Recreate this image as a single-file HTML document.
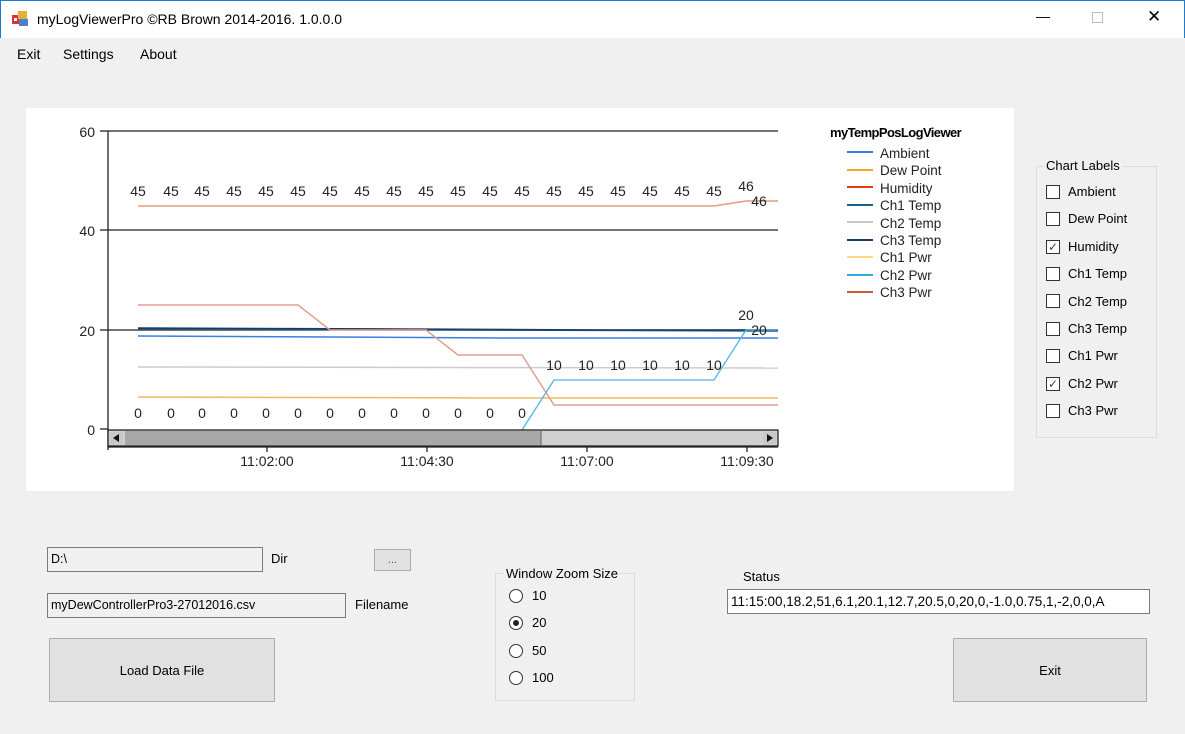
<!DOCTYPE html>
<html><head><meta charset="utf-8"><style>
*{margin:0;padding:0;box-sizing:border-box}
body{width:1185px;height:734px;background:#f0f0f0;font-family:"Liberation Sans",sans-serif;font-size:13px;color:#000;position:relative;overflow:hidden}
.a{position:absolute}
.title{left:0;top:0;width:1185px;height:38px;background:#fff;border:1px solid #1b7bd0;border-bottom:none}
.tb{border:1px solid #7a7a7a;background:#f0f0f0;padding:0 3px;line-height:23px;font-size:12.5px}
.btn{border:1px solid #adadad;background:#e1e1e1;display:flex;align-items:center;justify-content:center;font-size:13px}
.cb{width:14px;height:14px;border:1px solid #333;background:#fff}
.grp{border:1px solid #dcdcdc}
.rd{width:14px;height:14px;border:1px solid #333;border-radius:50%;background:#fff}
</style></head><body>
<div class="a title"></div>
<svg class="a" style="left:12px;top:10px" width="18" height="18"><rect x="0" y="5" width="8" height="9" fill="#d33"/><rect x="6" y="1" width="9" height="8" fill="#e8b030"/><rect x="7" y="9" width="9" height="7" fill="#4a7fd0"/><rect x="2" y="8" width="3" height="3" fill="#fff"/></svg>
<div class="a" style="left:37px;top:11px;font-size:14px">myLogViewerPro ©RB Brown 2014-2016. 1.0.0.0</div>
<div class="a" style="left:1036px;top:8px;font-size:14px">&#8212;</div>
<div class="a" style="left:1092px;top:12px;width:11px;height:11px;border:1px solid #bbb"></div>
<div class="a" style="left:1147px;top:7px;font-size:17px">✕</div>
<div class="a" style="left:17px;top:46px;font-size:14px">Exit</div>
<div class="a" style="left:63px;top:46px;font-size:14px">Settings</div>
<div class="a" style="left:140px;top:46px;font-size:14px">About</div>

<div class="a" style="left:26px;top:108px;width:988px;height:383px;background:#fff"></div>
<svg class="a" style="left:0;top:0" width="1185" height="734" font-family="Liberation Sans,sans-serif" font-size="14">
<g stroke="#222" stroke-width="1.3">
<line x1="108" y1="131" x2="778" y2="131"/><line x1="108" y1="230" x2="778" y2="230"/><line x1="108" y1="330" x2="778" y2="330"/>
<line x1="108" y1="131" x2="108" y2="450"/>
<line x1="100" y1="131" x2="108" y2="131"/><line x1="100" y1="230" x2="108" y2="230"/><line x1="100" y1="330" x2="108" y2="330"/><line x1="100" y1="429" x2="108" y2="429"/>
<line x1="108" y1="447" x2="778" y2="447"/>
<line x1="267" y1="447" x2="267" y2="452"/><line x1="427" y1="447" x2="427" y2="452"/><line x1="587" y1="447" x2="587" y2="452"/><line x1="747" y1="447" x2="747" y2="452"/>
</g>
<g text-anchor="end" fill="#222"><text x="95" y="137">60</text><text x="95" y="236">40</text><text x="95" y="336">20</text><text x="95" y="435">0</text></g>
<g text-anchor="middle" fill="#222"><text x="267" y="466">11:02:00</text><text x="427" y="466">11:04:30</text><text x="587" y="466">11:07:00</text><text x="747" y="466">11:09:30</text></g>
<polyline fill="none" stroke="#f0b860" stroke-width="1.5" points="138,397 500,398 778,398"/>
<polyline fill="none" stroke="#cccccc" stroke-width="1.5" points="138,367 778,368"/>
<polyline fill="none" stroke="#3a80e0" stroke-width="1.5" points="138,336 330,337 500,338 778,338"/>
<polyline fill="none" stroke="#1a6090" stroke-width="1.5" points="138,329 778,331"/>
<polyline fill="none" stroke="#1e3860" stroke-width="1.5" points="138,328 400,329 600,330 778,330"/>
<polyline fill="none" stroke="#e89880" stroke-width="1.5" points="138,206 714,206 746,201 778,201"/>
<polyline fill="none" stroke="#e0a090" stroke-width="1.5" points="138,305 298,305 330,330 426,330 458,355 522,355 554,405 778,405"/>
<polyline fill="none" stroke="#50b4e8" stroke-width="1.3" points="522,430 554,380 714,380 746,330 778,330"/>
<g fill="#222" text-anchor="middle">
<text x="138" y="196">45</text><text x="171" y="196">45</text><text x="202" y="196">45</text><text x="234" y="196">45</text><text x="266" y="196">45</text><text x="298" y="196">45</text><text x="330" y="196">45</text><text x="362" y="196">45</text><text x="394" y="196">45</text><text x="426" y="196">45</text><text x="458" y="196">45</text><text x="490" y="196">45</text><text x="522" y="196">45</text><text x="554" y="196">45</text><text x="586" y="196">45</text><text x="618" y="196">45</text><text x="650" y="196">45</text><text x="682" y="196">45</text><text x="714" y="196">45</text><text x="746" y="191">46</text><text x="759" y="206">46</text>
<text x="138" y="418">0</text><text x="171" y="418">0</text><text x="202" y="418">0</text><text x="234" y="418">0</text><text x="266" y="418">0</text><text x="298" y="418">0</text><text x="330" y="418">0</text><text x="362" y="418">0</text><text x="394" y="418">0</text><text x="426" y="418">0</text><text x="458" y="418">0</text><text x="490" y="418">0</text><text x="522" y="418">0</text>
<text x="554" y="370">10</text><text x="586" y="370">10</text><text x="618" y="370">10</text><text x="650" y="370">10</text><text x="682" y="370">10</text><text x="714" y="370">10</text>
<text x="746" y="320">20</text><text x="759" y="335">20</text>
</g>
<rect x="108" y="430" width="670" height="16" fill="#d0d0d0" stroke="#222" stroke-width="1.3"/>
<rect x="125" y="431" width="416" height="14" fill="#a8a8a8"/>
<line x1="541" y1="431" x2="541" y2="445" stroke="#666"/>
<rect x="110" y="432" width="13" height="12" fill="#c8c8c8"/><path d="M113 438 L119 434 L119 442Z" fill="#111"/>
<rect x="763" y="432" width="13" height="12" fill="#c8c8c8"/><path d="M773 438 L767 434 L767 442Z" fill="#111"/>
<text x="830" y="137" font-weight="bold" font-size="13" letter-spacing="-0.6">myTempPosLogViewer</text>
<g font-size="13.5" fill="#222">
<line x1="847" y1="152" x2="873" y2="152" stroke="#3a80e0" stroke-width="2"/><text x="880" y="158">Ambient</text>
<line x1="847" y1="170" x2="873" y2="170" stroke="#f0a830" stroke-width="2"/><text x="880" y="175">Dew Point</text>
<line x1="847" y1="187" x2="873" y2="187" stroke="#e04010" stroke-width="2"/><text x="880" y="193">Humidity</text>
<line x1="847" y1="205" x2="873" y2="205" stroke="#1a6090" stroke-width="2"/><text x="880" y="210">Ch1 Temp</text>
<line x1="847" y1="222" x2="873" y2="222" stroke="#c8c8c8" stroke-width="2"/><text x="880" y="228">Ch2 Temp</text>
<line x1="847" y1="240" x2="873" y2="240" stroke="#1e3860" stroke-width="2"/><text x="880" y="245">Ch3 Temp</text>
<line x1="847" y1="257" x2="873" y2="257" stroke="#ffd880" stroke-width="2"/><text x="880" y="262">Ch1 Pwr</text>
<line x1="847" y1="275" x2="873" y2="275" stroke="#30a8e8" stroke-width="2"/><text x="880" y="280">Ch2 Pwr</text>
<line x1="847" y1="292" x2="873" y2="292" stroke="#d05a38" stroke-width="2"/><text x="880" y="297">Ch3 Pwr</text>
</g>
</svg>

<div class="a grp" style="left:1036px;top:166px;width:121px;height:272px"></div>
<div class="a" style="left:1044px;top:158px;background:#f0f0f0;padding:0 2px">Chart Labels</div>
<div class="a" style="left:1046px;top:178px;line-height:27.4px">
<div style="display:flex;align-items:center;gap:8px"><div class="cb"></div>Ambient</div>
<div style="display:flex;align-items:center;gap:8px"><div class="cb"></div>Dew Point</div>
<div style="display:flex;align-items:center;gap:8px"><div class="cb" style="font-size:12px;line-height:12px;text-align:center;color:#444">✓</div>Humidity</div>
<div style="display:flex;align-items:center;gap:8px"><div class="cb"></div>Ch1 Temp</div>
<div style="display:flex;align-items:center;gap:8px"><div class="cb"></div>Ch2 Temp</div>
<div style="display:flex;align-items:center;gap:8px"><div class="cb"></div>Ch3 Temp</div>
<div style="display:flex;align-items:center;gap:8px"><div class="cb"></div>Ch1 Pwr</div>
<div style="display:flex;align-items:center;gap:8px"><div class="cb" style="font-size:12px;line-height:12px;text-align:center;color:#444">✓</div>Ch2 Pwr</div>
<div style="display:flex;align-items:center;gap:8px"><div class="cb"></div>Ch3 Pwr</div>
</div>

<div class="a tb" style="left:47px;top:547px;width:216px;height:25px">D:\</div>
<div class="a" style="left:271px;top:551px">Dir</div>
<div class="a btn" style="left:374px;top:549px;width:37px;height:22px;font-size:11px;color:#555">...</div>
<div class="a tb" style="left:47px;top:593px;width:299px;height:25px">myDewControllerPro3-27012016.csv</div>
<div class="a" style="left:355px;top:597px">Filename</div>
<div class="a btn" style="left:49px;top:638px;width:226px;height:64px">Load Data File</div>

<div class="a grp" style="left:495px;top:573px;width:140px;height:128px"></div>
<div class="a" style="left:504px;top:566px;background:#f0f0f0;padding:0 2px">Window Zoom Size</div>
<div class="a" style="left:509px;top:582px;line-height:27.4px">
<div style="display:flex;align-items:center;gap:9px"><div class="rd"></div>10</div>
<div style="display:flex;align-items:center;gap:9px"><div class="rd" style="display:flex;align-items:center;justify-content:center"><div style="width:6px;height:6px;border-radius:50%;background:#222"></div></div>20</div>
<div style="display:flex;align-items:center;gap:9px"><div class="rd"></div>50</div>
<div style="display:flex;align-items:center;gap:9px"><div class="rd"></div>100</div>
</div>

<div class="a" style="left:743px;top:569px">Status</div>
<div class="a tb" style="left:727px;top:589px;width:423px;height:25px;background:#fff;font-size:13.5px">11:15:00,18.2,51,6.1,20.1,12.7,20.5,0,20,0,-1.0,0.75,1,-2,0,0,A</div>
<div class="a btn" style="left:953px;top:638px;width:194px;height:64px">Exit</div>
</body></html>
